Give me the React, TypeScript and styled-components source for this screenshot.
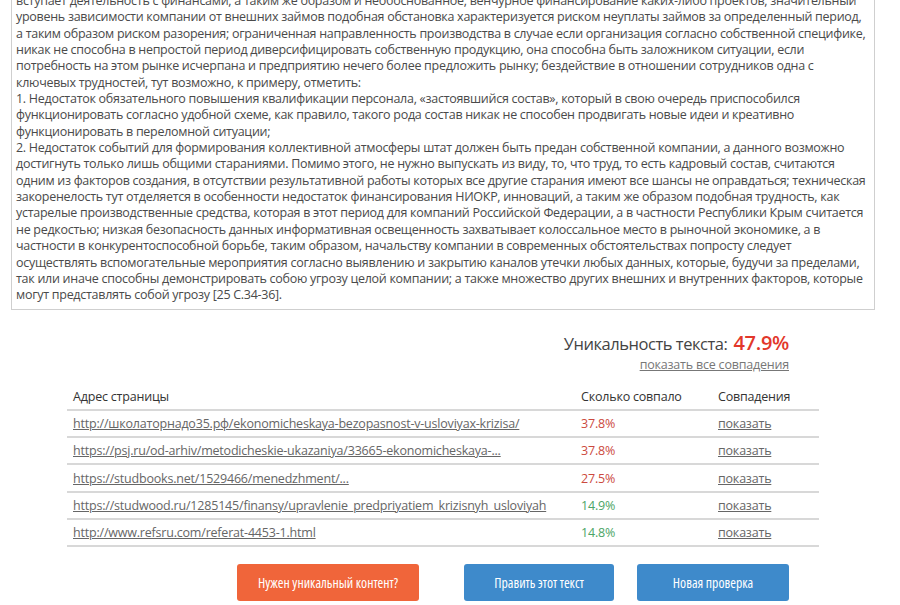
import React from "react";
import styled, { createGlobalStyle } from "styled-components";

const GlobalStyle = createGlobalStyle`
  html, body {
    margin: 0;
    padding: 0;
    background: #fff;
  }
  body {
    font-family: "Open Sans", "DejaVu Sans", sans-serif;
    color: #444;
    overflow: hidden;
  }
`;

const Page = styled.div`
  width: 900px;
  height: 605px;
  overflow: hidden;
  padding-left: 11px;
  box-sizing: border-box;
`;

const TextBox = styled.div`
  width: 864px;
  box-sizing: border-box;
  margin-top: -7px;
  border: 1px solid #cfcfcf;
  border-top: none;
  padding: 0 5px 5px 4px;
  font-size: 12.5px;
  letter-spacing: -0.28px;
  line-height: 16.35px;
  color: #4a4a4a;
`;

const Paragraph = styled.p`
  margin: 0;
`;

const Results = styled.div`
  width: 752px;
  margin: 0 0 0 56px;
`;

const Summary = styled.div`
  display: flex;
  flex-direction: column;
  align-items: flex-end;
  padding: 20px 30px 0 0;
`;

const Uniqueness = styled.div`
  font-size: 16.5px;
  letter-spacing: -0.45px;
  line-height: 26px;
  color: #444;
`;

const Score = styled.span`
  font-size: 20px;
  letter-spacing: -0.3px;
  font-weight: 600;
  color: #e2372a;
  margin-left: 6px;
`;

const AllMatches = styled.a`
  font-size: 12.5px;
  letter-spacing: -0.2px;
  line-height: 16px;
  color: #777;
  text-decoration: underline;
`;

const Table = styled.table`
  width: 752px;
  border-collapse: collapse;
  table-layout: fixed;
  margin-top: 11px;
  font-size: 12.5px;
  letter-spacing: -0.2px;
`;

const HeadCell = styled.th<{ $w: number }>`
  width: ${(p) => p.$w}px;
  box-sizing: border-box;
  text-align: left;
  font-weight: 400;
  color: #333;
  padding: 0 6px;
  height: 26px;
  vertical-align: middle;
  border-bottom: 2px solid #d8d8d8;
`;

const Cell = styled.td`
  box-sizing: border-box;
  padding: 0 6px;
  height: 27.4px;
  vertical-align: middle;
  border-bottom: 2px solid #d8d8d8;
  white-space: nowrap;
  overflow: hidden;
`;

const Link = styled.a`
  color: #666;
  text-decoration: underline;
`;

const Percent = styled.span<{ $high: boolean }>`
  color: ${(p) => (p.$high ? "#cc4a3e" : "#4ca566")};
`;

const ButtonRow = styled.div`
  display: flex;
  justify-content: flex-end;
  gap: 23px;
  padding-right: 30px;
  margin-top: 17px;
`;

const Button = styled.button<{ $variant: "orange" | "blue"; $w: number }>`
  width: ${(p) => p.$w}px;
  height: 37px;
  border: none;
  border-radius: 3px;
  font-family: "Open Sans", sans-serif;
  font-size: 13.8px;
  font-stretch: 82%;
  color: #fff;
  cursor: pointer;
  background: ${(p) => (p.$variant === "orange" ? "#f0653a" : "#3e8acb")};
  &:first-child {
    margin-right: 22px;
  }
`;

const rows = [
  {
    url: "http://школаторнадо35.рф/ekonomicheskaya-bezopasnost-v-usloviyax-krizisa/",
    pct: 37.8,
  },
  {
    url: "https://psj.ru/od-arhiv/metodicheskie-ukazaniya/33665-ekonomicheskaya-...",
    pct: 37.8,
  },
  { url: "https://studbooks.net/1529466/menedzhment/...", pct: 27.5 },
  {
    url: "https://studwood.ru/1285145/finansy/upravlenie_predpriyatiem_krizisnyh_usloviyah",
    pct: 14.9,
  },
  { url: "http://www.refsru.com/referat-4453-1.html", pct: 14.8 },
];

const App = () => {
  return (
    <>
      <GlobalStyle />
      <Page>
        <TextBox>
          <Paragraph>
            вступает деятельность с финансами, а таким же образом и необоснованное, венчурное
            финансирование каких-либо проектов, значительный уровень зависимости компании от
            внешних займов подобная обстановка характеризуется риском неуплаты займов за
            определенный период, а таким образом риском разорения; ограниченная направленность
            производства в случае если организация согласно собственной специфике, никак не
            способна в непростой период диверсифицировать собственную продукцию, она способна
            быть заложником ситуации, если потребность на этом рынке исчерпана и предприятию
            нечего более предложить рынку; бездействие в отношении сотрудников одна с ключевых
            трудностей, тут возможно, к примеру, отметить:
          </Paragraph>
          <Paragraph>
            1. Недостаток обязательного повышения квалификации персонала, «застоявшийся состав»,
            который в свою очередь приспособился функционировать согласно удобной схеме, как
            правило, такого рода состав никак не способен продвигать новые идеи и креативно
            функционировать в переломной ситуации;
          </Paragraph>
          <Paragraph>
            2. Недостаток событий для формирования коллективной атмосферы штат должен быть предан
            собственной компании, а данного возможно достигнуть только лишь общими стараниями.
            Помимо этого, не нужно выпускать из виду, то, что труд, то есть кадровый состав,
            считаются одним из факторов создания, в отсутствии результативной работы которых все
            другие старания имеют все шансы не оправдаться; техническая закоренелость тут
            отделяется в особенности недостаток финансирования НИОКР, инноваций, а таким же
            образом подобная трудность, как устарелые производственные средства, которая в этот
            период для компаний Российской Федерации, а в частности Республики Крым считается не
            редкостью; низкая безопасность данных информативная освещенность захватывает
            колоссальное место в рыночной экономике, а в частности в конкурентоспособной борьбе,
            таким образом, начальству компании в современных обстоятельствах попросту следует
            осуществлять вспомогательные мероприятия согласно выявлению и закрытию каналов утечки
            любых данных, которые, будучи за пределами, так или иначе способны демонстрировать
            собою угрозу целой компании; а также множество других внешних и внутренних факторов,
            которые могут представлять собой угрозу [25 С.34-36].
          </Paragraph>
        </TextBox>

        <Results>
          <Summary>
            <Uniqueness>
              Уникальность текста:<Score>47.9%</Score>
            </Uniqueness>
            <AllMatches href="#">показать все совпадения</AllMatches>
          </Summary>

          <Table>
            <thead>
              <tr>
                <HeadCell $w={508}>Адрес страницы</HeadCell>
                <HeadCell $w={137}>Сколько совпало</HeadCell>
                <HeadCell $w={107}>Совпадения</HeadCell>
              </tr>
            </thead>
            <tbody>
              {rows.map((row, index) => (
                <tr key={index}>
                  <Cell>
                    <Link href="#">{row.url}</Link>
                  </Cell>
                  <Cell>
                    <Percent $high={row.pct > 20}>{row.pct.toFixed(1)}%</Percent>
                  </Cell>
                  <Cell>
                    <Link href="#">показать</Link>
                  </Cell>
                </tr>
              ))}
            </tbody>
          </Table>

          <ButtonRow>
            <Button $variant="orange" $w={182}>
              Нужен уникальный контент?
            </Button>
            <Button $variant="blue" $w={150}>
              Править этот текст
            </Button>
            <Button $variant="blue" $w={152}>
              Новая проверка
            </Button>
          </ButtonRow>
        </Results>
      </Page>
    </>
  );
};

export default App;
